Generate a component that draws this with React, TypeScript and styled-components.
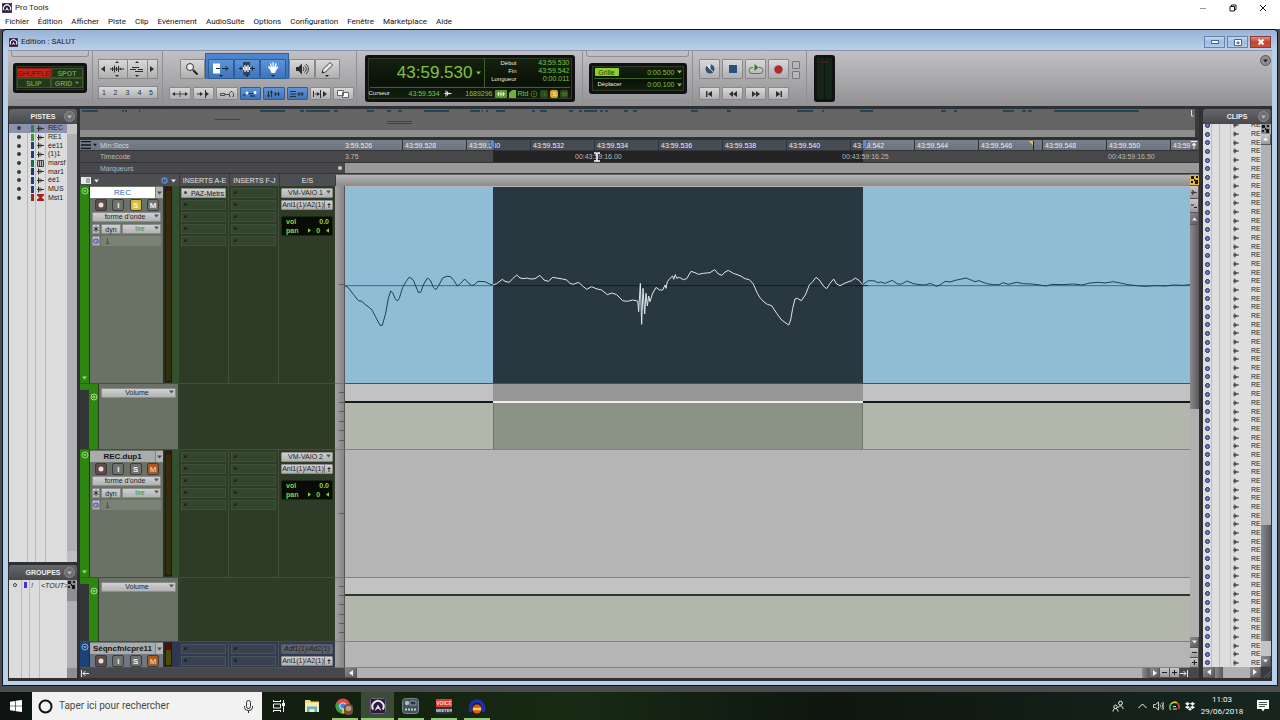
import React from "react";
import styled, { createGlobalStyle } from "styled-components";

const GlobalStyle = createGlobalStyle`
  *, *::before, *::after { box-sizing: border-box; }
  html, body { margin: 0; padding: 0; background: #4a4c4e; }
  body { font: 7px/9px "Liberation Sans", Arial, sans-serif; color: #1c1c1c; }
  button, select, input { font: inherit; color: inherit; margin: 0; padding: 0; border: 0; background: none; border-radius: 0; }
  button { display: flex; align-items: center; justify-content: center; cursor: pointer; }
  select { appearance: none; }
  ul { list-style: none; margin: 0; padding: 0; }
  svg { display: block; flex: none; }
`;

/* ---------- application frame ---------- */

const Page = styled.div`
  min-height: 100vh;
  display: flex;
  flex-direction: column;
  overflow: hidden;
`;

const AppTitle = styled.header`
  display: flex;
  align-items: center;
  height: 15px;
  padding: 0 2px;
  background: #fff;
  gap: 3px;
  font: 8px/12px Roboto, "Open Sans", sans-serif;
`;

const AppControls = styled.div`
  margin-left: auto;
  display: flex;
  button { width: 30px; height: 14px; }
  button:first-child { color: #999; }
`;

const MenuBar = styled.nav`
  display: flex;
  height: 14px;
  padding-left: 5px;
  background: #fff;
  gap: 9px;
  button { font: 8px/12px Roboto, "Open Sans", sans-serif; color: #111; white-space: nowrap; }
`;

const EditWindow = styled.main`
  flex: 1;
  display: flex;
  flex-direction: column;
  margin: 0 2px 6px;
  padding: 0 5px 4px;
  border: 1px solid #0b1420;
  border-radius: 4px 4px 0 0;
  background: linear-gradient(#98b3d6, #b9d0ea 20px);
`;

const WindowTitle = styled.div`
  display: flex;
  align-items: center;
  height: 20px;
  padding: 4px 1px 0;
  gap: 3px;
  font: 8px/12px Roboto, "Open Sans", sans-serif;
`;

const WindowButtons = styled.div`
  margin-left: auto;
  display: flex;
  gap: 2px;
`;

const WindowButton = styled.button<{ $close?: boolean }>`
  width: 21px;
  height: 12px;
  border: 1px solid ${(p) => (p.$close ? "#8d3a36" : "#6484ad")};
  background: ${(p) => (p.$close ? "linear-gradient(#dc9286, #c24432 50%, #c9523e)" : "linear-gradient(#c3d7ee, #9dbbdf 50%, #aecbea)")};
`;

/* ---------- toolbar ---------- */

const Toolbar = styled.div`
  display: flex;
  height: 56px;
  background: linear-gradient(#c1c1c5, #929294);
  border-top: 1px solid #8c92ac;
`;

const Section = styled.section<{ $w: number }>`
  width: ${(p) => p.$w}px;
  flex: none;
  display: flex;
  flex-direction: column;
  align-items: center;
  border-right: 1px solid #8f8f93;
`;

const Recess = styled.div<{ $bottom?: boolean }>`
  align-self: stretch;
  height: 6px;
  margin: 0 3px;
  border: 1px solid #8f8f93;
  ${(p) => (p.$bottom ? "border-bottom: 0; margin-top: auto; border-radius: 3px 3px 0 0;" : "border-top: 0; border-radius: 0 0 3px 3px;")}
`;

const Lcd = styled.div`
  background: linear-gradient(#16220f, #0a1207 60%, #142010);
  border: 3px solid #101110;
  border-radius: 3px;
  box-shadow: inset 0 0 0 1px #2f3a2a;
  color: #7fc441;
`;

const ModePad = styled(Lcd)`
  width: 74px;
  height: 30px;
  margin-top: 6px;
  padding: 2px 1px;
  display: grid;
  grid-template: 10px 10px / 1fr 1fr;
`;

const ModeButton = styled.button<{ $on?: boolean }>`
  gap: 3px;
  color: ${(p) => (p.$on ? "#5c0d08" : "#6c9a44")};
  background: ${(p) => (p.$on ? "#c8261a" : "#203817")};
  border: 1px solid ${(p) => (p.$on ? "#8e1d14" : "#38552b")};
  font-weight: ${(p) => (p.$on ? 400 : 700)};
`;

const ButtonRow = styled.div<{ $mt?: number; $gap?: number; $ml?: number }>`
  display: flex;
  margin-top: ${(p) => p.$mt ?? 0}px;
  margin-left: ${(p) => p.$ml ?? 0}px;
  gap: ${(p) => p.$gap ?? 0}px;
`;

const ToolButton = styled.button<{ $w: number; $h?: number; $on?: boolean; $edge?: string }>`
  width: ${(p) => p.$w}px;
  height: ${(p) => p.$h ?? 20}px;
  flex: none;
  color: #2e2e30;
  background: ${(p) => (p.$on ? "linear-gradient(#5e95d8, #3d74ba)" : "linear-gradient(#d9d9da, #b0b0b2)")};
  border: 1px solid ${(p) => (p.$on ? "#2f5c96" : "#88888b")};
  border-width: ${(p) => p.$edge ?? "1px"};
  border-radius: 1px;
`;

const SmartTools = styled.div`
  display: flex;
  align-items: flex-end;
  height: 26px;
  margin-top: -6px;
  padding: 0 2px;
  background: linear-gradient(#4f87ce, #3b70b6);
  border: 1px solid #305f9e;
  border-bottom: 0;
`;

const Counter = styled(Lcd)`
  width: 210px;
  height: 47px;
  margin-top: 4px;
  display: flex;
  flex-direction: column;
`;

const CounterTop = styled.div`
  display: flex;
  height: 30px;
  border-bottom: 1px solid #3c6425;
  margin: 0 2px;
`;

const MainTime = styled.output`
  width: 115px;
  display: flex;
  align-items: center;
  justify-content: flex-end;
  gap: 3px;
  padding-right: 3px;
  font-size: 17px;
  line-height: 18px;
  border-right: 1px solid #3c6425;
`;

const Ranges = styled.dl`
  flex: 1;
  display: grid;
  grid-template: repeat(3, 8px) / 32px 1fr;
  margin: 1px 0 0;
  text-align: right;
  dt { color: #e6eadf; font-size: 6px; line-height: 8px; }
  dd { margin: 0; line-height: 8px; }
`;

const CounterBottom = styled.div`
  display: flex;
  align-items: center;
  height: 11px;
  margin: 0 1px;
  gap: 2px;
  > b { color: #e6eadf; font-weight: 400; width: 38px; font-size: 6px; }
  > output { width: 32px; }
  > output:nth-of-type(2) { width: 38px; text-align: right; }
`;

const Badge = styled.span<{ $bg: string; $fg: string }>`
  width: 8px;
  height: 8px;
  line-height: 8px;
  font-size: 6px;
  text-align: center;
  border-radius: 2px;
  background: ${(p) => p.$bg};
  color: ${(p) => p.$fg};
`;

const GridPanel = styled(Lcd)`
  width: 98px;
  height: 31px;
  margin-top: 6px;
  padding: 0 2px;
`;

const GridRow = styled.div`
  display: flex;
  align-items: center;
  justify-content: flex-end;
  height: 12px;
  gap: 2px;
  & + & { border-top: 1px solid #3c6425; }
  > :first-child { margin-right: auto; }
`;

const GridPill = styled.button`
  width: 24px;
  height: 8px;
  margin-left: 1px;
  border-radius: 1px;
  background: #8fd12a;
  color: #24380c;
`;

const Nudge = styled.span`
  margin-left: 4px;
  color: #e6eadf;
  font-size: 6px;
`;

const Transport = styled.div`
  display: grid;
  grid-template: 20px 13px / repeat(4, 21px) 9px;
  gap: 8px 2px;
  margin-top: 8px;
`;

const SmallToggles = styled.div`
  display: flex;
  flex-direction: column;
  gap: 2px;
  padding: 2px 0 0 1px;
`;

const SmallToggle = styled.button`
  width: 8px;
  height: 8px;
  flex: none;
  border: 1px solid #77777a;
  border-radius: 1px;
  background: #b8b8ba;
`;

const OutputMeter = styled.div`
  width: 21px;
  height: 47px;
  margin: 4px 0 0 7px;
  padding: 2px;
  border: 3px solid #121212;
  border-radius: 3px;
  background: linear-gradient(90deg, #152417 45%, #0b140c 45%, #0b140c 55%, #152417 55%);
  &::before { content: ""; display: block; height: 2px; margin: 1px 2px; background: #4a1a16; }
`;

const RoundMenu = styled.button`
  width: 11px;
  height: 11px;
  border-radius: 50%;
  border: 1px solid #5a5a5c;
  background: #8f8f92;
  color: #232323;
`;

const ToolbarMenu = styled(RoundMenu)`
  margin: 4px 1px 0 auto;
`;

/* ---------- body ---------- */

const Body = styled.div`
  flex: 1;
  display: grid;
  grid-template-columns: 68px minmax(0, 1fr) 69px;
  column-gap: 3px;
  padding: 3px 1px;
  background: #2e3033;
`;

const SidePanel = styled.aside`
  display: flex;
  flex-direction: column;
  min-height: 0;
`;

const ClipsPanel = styled(SidePanel)`
  margin-left: 1px;
`;

const PanelHeader = styled.div<{ $second?: boolean }>`
  display: grid;
  grid-template-columns: 11px 1fr 11px;
  align-items: center;
  height: 15px;
  flex: none;
  margin-top: ${(p) => (p.$second ? 3 : 0)}px;
  padding: 0 2px;
  border-radius: 3px 3px 0 0;
  background: linear-gradient(#66676a, #48494c);
  color: #eee;
  h2 { grid-column: 2; margin: 0; text-align: center; font: 700 7px/10px "Liberation Sans", Arial, sans-serif; }
  button { background: #6e6f72; color: #bdbdbd; border-color: #8d8d90; }
`;

const PanelBody = styled.div<{ $fixed?: number }>`
  display: flex;
  ${(p) => (p.$fixed ? `flex: none; height: ${p.$fixed}px;` : "flex: 1;")}
  min-height: 0;
  overflow: hidden;
`;

const TrackPane = styled.div`
  flex: 1;
  min-width: 0;
  background: linear-gradient(90deg, #dcdcdc 18px, #b9b9b9 18px, #b9b9b9 19px, #dcdcdc 19px, #dcdcdc 26px, #b9b9b9 26px, #b9b9b9 27px, #dcdcdc 27px, #dcdcdc 36px, #b9b9b9 36px, #b9b9b9 37px, #dcdcdc 37px);
`;

const TrackList = styled.ul`
  display: flex;
  flex-direction: column;
  height: 78px;
`;

const TrackItem = styled.li<{ $on?: boolean }>`
  flex: 1;
  display: grid;
  grid-template-columns: 18px 10px 11px 1fr;
  align-items: center;
  line-height: 8px;
  white-space: nowrap;
  background: ${(p) => (p.$on ? "#8b93b0" : "transparent")};
`;

const Dot = styled.span`
  width: 4px;
  height: 4px;
  margin-left: 8px;
  border-radius: 50%;
  background: #3a3a3a;
`;

const ColorChip = styled.span<{ $c: string }>`
  width: 3px;
  height: 7px;
  margin-left: 4px;
  background: ${(p) => p.$c};
`;

const SideScroll = styled.div`
  width: 10px;
  display: flex;
  flex-direction: column;
  background: #ababad;
`;

const GroupItem = styled.div`
  display: grid;
  grid-template-columns: 15px 7px 10px 1fr;
  align-items: center;
  height: 10px;
  font-style: italic;
  white-space: nowrap;
`;

const GroupPane = styled.div`
  flex: 1;
  min-width: 0;
  background: linear-gradient(90deg, #dcdcdc 12px, #bcbcbc 12px, #bcbcbc 13px, #dcdcdc 13px, #dcdcdc 20px, #bcbcbc 20px, #bcbcbc 21px, #dcdcdc 21px, #dcdcdc 30px, #bcbcbc 30px, #bcbcbc 31px, #dcdcdc 31px);
`;

const ClipPane = styled.div`
  flex: 1;
  min-width: 0;
  display: flex;
  flex-direction: column;
  overflow: hidden;
  background: linear-gradient(90deg, #dedede 8px, #bcbcbc 8px, #bcbcbc 9px, #dedede 9px, #dedede 16px, #bcbcbc 16px, #bcbcbc 17px, #dedede 17px, #dedede 27px, #c6c6c6 27px, #c6c6c6 28px, #dedede 28px);
`;

const ClipList = styled.ul`
  flex: 1;
  display: flex;
  flex-direction: column;
  margin-top: -3px;
`;

const ClipItem = styled.li`
  flex: 1;
  display: grid;
  grid-template-columns: 28px 18px 1fr;
  align-items: center;
  line-height: 8px;
  padding-left: 2px;
`;

const ScrollButton = styled.button<{ $w: number; $h: number }>`
  width: ${(p) => p.$w}px;
  height: ${(p) => p.$h}px;
  flex: none;
  background: linear-gradient(135deg, #8a8a8c, #5c5c5e);
  border: 1px solid #555557;
  border-width: 0 1px 1px 0;
  color: #f2f2f2;
`;

const LightButton = styled(ScrollButton)<{ $ink?: string }>`
  background: linear-gradient(#c8c8c8, #9a9a9a);
  color: ${(p) => p.$ink ?? "#1f1f1f"};
`;

const Track = styled.div<{ $grow?: number; $h?: number; $dark?: boolean; $across?: boolean; $c?: string }>`
  ${(p) => (p.$h ? `flex: none; ${p.$across ? "width" : "height"}: ${p.$h}px;` : `flex: ${p.$grow ?? 1};`)}
  background: ${(p) => p.$c ?? (p.$dark ? "linear-gradient(90deg, #8a8a8c, #59595b)" : "#b0b0b2")};
`;

const HScroll = styled.div`
  display: flex;
  height: 11px;
  flex: none;
  background: #3a3b3d;
  color: #77787a;
`;

/* ---------- editor ---------- */

const Editor = styled.section`
  display: flex;
  flex-direction: column;
  min-width: 0;
`;

const Overview = styled.div`
  height: 28px;
  margin-bottom: 3px;
  overflow: hidden;
  background: linear-gradient(#656565 21px, #8e8e8e 21px);
  border-right: 4px solid #3a3b3d;
`;

const RulerRow = styled.div<{ $h: number; $bg?: string }>`
  display: flex;
  height: ${(p) => p.$h}px;
  background: ${(p) => p.$bg ?? "#48484a"};
  border-bottom: 1px solid #333538;
  color: ${(p) => (p.$bg ? "#d4d4d4" : "#b9b9b9")};
`;

const RulerName = styled.div`
  width: 265px;
  flex: none;
  display: flex;
  align-items: center;
  padding-left: 20px;
  position: relative;
`;

const RulerMenu = styled.button`
  position: absolute;
  left: 1px;
  top: 1px;
  gap: 2px;
  color: #14161a;
`;

const MarkerAdd = styled.button`
  width: 4px;
  height: 4px;
  margin: 0 3px 0 auto;
  border-radius: 50%;
  background: #c9c9c9;
`;

const Timeline = styled.div<{ $bg?: string }>`
  flex: 1;
  min-width: 0;
  display: flex;
  position: relative;
  overflow: hidden;
  background: ${(p) => p.$bg ?? "transparent"};
`;

const RulerSelection = styled.div<{ $c: string }>`
  position: absolute;
  inset: 0 auto 0 148px;
  width: 370px;
  background: ${(p) => p.$c};
`;

const Tick = styled.span<{ $w: number; $plain?: boolean; $first?: boolean }>`
  position: relative;
  width: ${(p) => p.$w}px;
  flex: none;
  padding-left: ${(p) => (p.$first ? 0 : 2)}px;
  border-left: ${(p) => (p.$plain || p.$first ? "0" : "1px solid #2d3238")};
  line-height: 11px;
  color: ${(p) => (p.$plain ? "#b9b9b9" : "#e9edf2")};
  white-space: nowrap;
`;

const OverMark = styled.svg<{ $x: number }>`
  position: absolute;
  left: ${(p) => p.$x}px;
  top: 1px;
`;

const EditArea = styled.div`
  display: flex;
  flex: 1;
`;

const Tracks = styled.div`
  flex: 1;
  min-width: 0;
`;

const ColumnHeads = styled.div`
  display: grid;
  grid-template-columns: 99px 50px 50px 56px 1fr;
  height: 12px;
  background: #4d4e51;
  color: #e4e4e4;
  text-align: center;
  line-height: 13px;
  > * + * { border-left: 1px solid #38393b; }
  > :last-child { background: linear-gradient(#b4b4b6, #8c8c8e); border-top: 1px solid #666; border-bottom: 1px solid #555; }
`;

const ListTools = styled.div`
  display: flex;
  align-items: center;
  gap: 3px;
  padding: 0 3px 0 1px;
  > :nth-child(3) { margin-left: auto; }
`;

type Tone = { bar: string; panel: string; mid: string; cell: string; slot: string; edge: string; mark: string };
const GREEN: Tone = { bar: "#2d860f", panel: "#697265", mid: "#33502f", cell: "#2d3b27", slot: "#34452e", edge: "#3f5139", mark: "#9be07c" };
const BLUE: Tone = { bar: "#1c4276", panel: "#707682", mid: "#2e3850", cell: "#323b4d", slot: "#39414f", edge: "#4a5364", mark: "#8db4e6" };

const TrackRow = styled.article<{ $h: number }>`
  display: grid;
  grid-template-columns: 255px 10px minmax(0, 1fr);
  height: ${(p) => p.$h}px;
  overflow: hidden;
`;

const Strip = styled.div<{ $t: Tone }>`
  display: grid;
  grid-template-columns: 10px 73px 16px 50px 50px 56px;
  background: ${(p) => p.$t.cell};
  border-bottom: 1px solid ${(p) => p.$t.edge};
  overflow: hidden;
`;

const ColorBar = styled.div<{ $t: Tone }>`
  display: flex;
  flex-direction: column;
  align-items: center;
  justify-content: space-between;
  padding: 1px 0 3px;
  border-right: 1px solid #1d3a14;
  background: ${(p) => p.$t.bar};
  color: ${(p) => p.$t.mark};
`;

const TrackPanel = styled.div<{ $t: Tone }>`
  background: ${(p) => p.$t.panel};
  overflow: hidden;
`;

const NameRow = styled.div<{ $on?: boolean }>`
  display: flex;
  height: 11px;
  margin-top: 1px;
  background: ${(p) => (p.$on ? "#fff" : "#a9abac")};
  input {
    flex: 1;
    min-width: 0;
    text-align: center;
    font-size: 8px;
    font-weight: ${(p) => (p.$on ? 400 : 700)};
    color: ${(p) => (p.$on ? "#2a6db5" : "#151515")};
  }
  button { width: 8px; background: #b4b4b6; color: #4c4c4e; border-left: 1px solid #808082; }
`;

const StateRow = styled.div`
  display: flex;
  justify-content: space-between;
  padding: 1px 4px 0 5px;
`;

const StateButton = styled.button<{ $bg?: string; $fg?: string }>`
  width: 12px;
  height: 12px;
  border-radius: 2px;
  border: 1px solid #3b3d3c;
  background: ${(p) => p.$bg ?? "#6f7270"};
  color: ${(p) => p.$fg ?? "#f4f4f4"};
  font-weight: 700;
  font-size: 8px;
`;

const Controls = styled.div`
  display: grid;
  grid-template: repeat(3, 10px) / 8px 20px 39px;
  gap: 2px 1px;
  padding: 1px 2px;
`;

const Drop = styled.span<{ $wide?: boolean; $dim?: boolean }>`
  position: relative;
  display: block;
  height: 10px;
  ${(p) => (p.$wide ? "grid-column: 1 / -1;" : "")}
  select {
    display: block;
    width: 100%;
    height: 10px;
    padding: ${(p) => (p.$dim ? "0" : "0 6px 0 3px")};
    text-align-last: center;
    border-radius: 1px;
    border: 1px solid ${(p) => (p.$dim ? "#565c66" : "#8b8c8b")};
    background: ${(p) => (p.$dim ? "#5c636f" : "linear-gradient(#d0d0d0, #b2b2b2)")};
    line-height: 8px;
    font-style: ${(p) => (p.$dim ? "italic" : "normal")};
  }
  svg { position: absolute; right: 2px; top: 2px; color: #555; pointer-events: none; }
`;

const GreenDrop = styled(Drop)`
  select { color: #3d8a34; }
`;

const MiniButton = styled.button`
  height: 10px;
  border-radius: 1px;
  border: 1px solid #8b8c8b;
  background: linear-gradient(#d0d0d0, #b2b2b2);
`;

const Elastic = styled.div`
  grid-column: 2 / -1;
  padding-left: 4px;
  background: #7a8275;
  color: #4c534a;
`;

const MeterCell = styled.div<{ $t: Tone; $hot?: boolean }>`
  padding: 1px 7px 1px 2px;
  background: linear-gradient(90deg, #2b2f2a 9px, ${(p) => p.$t.mid} 9px);
  display: flex;
  &::before {
    content: "";
    flex: 1;
    border: 1px solid #1d1b10;
    background: ${(p) => (p.$hot ? "linear-gradient(#4a1208 6px, #4f4a08 6px)" : "linear-gradient(#3a1a0c 3px, #3a2a0c 3px, #30300a)")};
  }
`;

const Slots = styled.ul<{ $t: Tone }>`
  display: flex;
  flex-direction: column;
  gap: 2px;
  padding: 2px 2px 0;
  border-right: 1px solid ${(p) => p.$t.edge};
`;

const Slot = styled.li<{ $t: Tone; $on?: boolean }>`
  display: flex;
  align-items: center;
  height: 10px;
  flex: none;
  background: ${(p) => (p.$on ? "linear-gradient(#d0d0d0, #b2b2b2)" : p.$t.slot)};
  border: 1px solid ${(p) => (p.$on ? "#8b8c8b" : p.$t.edge)};
  white-space: nowrap;
  &::before { content: ""; width: 3px; height: 3px; margin: 0 4px 1px 2px; border-radius: 50%; background: ${(p) => (p.$on ? "#444" : "#1b2717")}; }
`;

const IoColumn = styled.div`
  display: flex;
  flex-direction: column;
  gap: 2px;
  padding: 2px 2px 0;
`;

const OutputRow = styled.div`
  display: flex;
  height: 10px;
  border: 1px solid #8b8c8b;
  border-radius: 1px;
  background: linear-gradient(#d0d0d0, #b2b2b2);
  white-space: nowrap;
  button:first-child { flex: 1; line-height: 8px; }
  button:last-child { width: 8px; border-left: 1px solid #77777a; }
`;

const VolPan = styled.dl`
  display: grid;
  grid-template: 9px 9px / 1fr 1fr;
  margin: 4px 0 0;
  padding: 0 3px 0 4px;
  height: 20px;
  border-radius: 2px;
  background: #070d05;
  border: 1px solid #1c2718;
  color: #8fd048;
  font-weight: 700;
  dd { margin: 0; text-align: right; }
`;

const PanValue = styled.dd`
  display: flex;
  align-items: center;
  justify-content: space-between;
`;

const Scale = styled.div`
  display: flex;
  flex-direction: column;
  align-items: flex-end;
  justify-content: space-evenly;
  background: linear-gradient(90deg, #a2a2a2, #858585);
  border-right: 1px solid #555;
  border-bottom: 1px solid #777;
  i { width: 5px; height: 1px; background: #5b5b5b; }
`;

const Stage = styled.div<{ $edge?: string }>`
  position: relative;
  display: grid;
  grid-template-columns: 148px 370px minmax(0, 1fr);
  overflow: hidden;
  background: #b5b5b5;
  border-bottom: 1px solid ${(p) => p.$edge ?? "#7f827e"};
`;

const ClipPart = styled.div<{ $on?: boolean }>`
  margin-top: 1px;
  background: ${(p) => (p.$on ? "#293840" : "#8fbdd6")};
`;

const WavePlot = styled.svg`
  position: absolute;
  left: 0;
  top: 1px;
`;

const LaneStrip = styled.div`
  display: grid;
  grid-template-columns: 9px 9px 1px 79px 1px 1fr;
  background: #2d3b27;
  border-bottom: 1px solid #3f5139;
  > :nth-child(1) { background: linear-gradient(#2d860f 6px, #343635 6px); }
  > :nth-child(2) { background: #2d860f; color: #a7e58c; display: flex; justify-content: center; padding-top: 9px; }
  > :nth-child(4) { background: #697265; padding: 4px 2px; }
  > :nth-child(6) { border-left: 1px solid #33452d; }
`;

const LanePart = styled.div<{ $on?: boolean; $top: number; $weight: number; $line: string }>`
  background: ${(p) => (p.$on ? "#8b9286" : "#b1b8ab")};
  box-shadow: ${(p) => (p.$on ? "inset 1px 0 #6f736d, inset -1px 0 #6f736d" : "none")};
  &::before {
    content: "";
    display: block;
    height: ${(p) => p.$top + p.$weight}px;
    background: ${(p) => (p.$on ? "#969696" : "#c2c2c2")};
    border-bottom: ${(p) => p.$weight}px solid ${(p) => p.$line};
  }
`;

const VScroll = styled.div`
  width: 9px;
  flex: none;
  display: flex;
  flex-direction: column;
  background: #b0b0b2;
`;

const BottomBar = styled.div`
  display: flex;
  height: 10px;
  background: #47484b;
  color: #e8e8e8;
`;

const BottomLeft = styled.div`
  width: 265px;
  flex: none;
  display: flex;
  align-items: center;
  padding-left: 1px;
`;

const EndButton = styled.button`
  width: 19px;
  justify-content: flex-start;
`;

const Beam = styled.svg`
  position: absolute;
  left: 248px;
  top: 1px;
  z-index: 2;
`;

/* ---------- taskbar ---------- */

const Taskbar = styled.footer`
  display: flex;
  align-items: stretch;
  height: 28px;
  background: linear-gradient(90deg, #0c1310, #14220f 30%, #182a14 45%, #0e160f 65%, #182620);
  color: #f3f3f3;
`;

const TaskButton = styled.button<{ $open?: boolean; $on?: boolean }>`
  width: 33px;
  background: ${(p) => (p.$open ? `linear-gradient(#8fcb73, #8fcb73) center bottom / ${p.$on ? 33 : 26}px 2px no-repeat` : "none")} ${(p) => (p.$on ? "#3c4a38" : "")};
`;

const StartButton = styled(TaskButton)`
  width: 32px;
`;

const Search = styled.label`
  display: flex;
  align-items: center;
  width: 230px;
  padding: 0 9px 0 6px;
  gap: 6px;
  background: #f2f2f2;
  color: #222;
  input { flex: 1; min-width: 0; font: 10px/14px Roboto, "Open Sans", sans-serif; color: #4a4a4a; outline: 0; }
  input::placeholder { color: #4a4a4a; opacity: 1; }
`;

const Tray = styled.div`
  margin-left: auto;
  display: flex;
  align-items: center;
  button { width: 16px; height: 28px; }
  button:first-child { margin-right: 8px; }
`;

const Clock = styled.time`
  width: 48px;
  text-align: center;
  font: 8px/12px Roboto, "Open Sans", sans-serif;
`;

const NoticeButton = styled.button`
  && { width: 34px; }
`;

/* ---------- icons ---------- */

const Down = ({ s = 5 }: { s?: number }) => (
  <svg width={s} height="4" viewBox="0 0 5 4" aria-hidden="true"><path d="M0 .5h5L2.5 3.5z" fill="currentColor" /></svg>
);
const Up = () => <svg width="5" height="4" viewBox="0 0 5 4" aria-hidden="true"><path d="M0 3.5h5L2.5.5z" fill="currentColor" /></svg>;
const Left = ({ s = 6 }: { s?: number }) => <svg width={s === 6 ? 4 : 3} height={s} viewBox="0 0 4 6" aria-hidden="true"><path d="M4 0v6L0 3z" fill="currentColor" /></svg>;
const Right = ({ s = 6 }: { s?: number }) => <svg width={s === 6 ? 4 : 3} height={s} viewBox="0 0 4 6" aria-hidden="true"><path d="M0 0v6l4-3z" fill="currentColor" /></svg>;

const Stroke = ({ w, h, d, fill, sw = 1 }: { w: number; h: number; d: string; fill?: string; sw?: number }) => (
  <svg width={w} height={h} viewBox={`0 0 ${w} ${h}`} fill="none" stroke="currentColor" strokeWidth={sw} aria-hidden="true">
    <path d={d} />
    {fill && <path d={fill} fill="currentColor" stroke="none" />}
  </svg>
);

const WaveGlyph = ({ w = 7, h = 7, c = "#333" }: { w?: number; h?: number; c?: string }) => (
  <svg width={w} height={h} viewBox="0 0 7 7" aria-hidden="true"><path d="M0 3.5h7M1.5.5v6M3 1.5v4M4.5 2.6v1.8" stroke={c} fill="none" /></svg>
);

const AvidGlyph = ({ s = 10 }: { s?: number }) => (
  <svg width={s} height={s} viewBox="0 0 16 16" aria-hidden="true">
    <rect width="16" height="16" rx="1" fill="#2b1a3c" />
    <rect x=".5" y=".5" width="15" height="15" rx="1" fill="none" stroke="#6f6480" />
    <path d="M3.200 11.500a5.600 5.600 0 1 1 9.600 0" fill="none" stroke="#ece8f2" strokeWidth="2" />
    <path d="M4.400 13 8 6.500 11.600 13 8 10.600z" fill="#ece8f2" />
  </svg>
);

const CheckerGlyph = ({ gold }: { gold?: boolean }) => (
  <svg width="9" height="10" viewBox="0 0 9 10" aria-hidden="true">
    <rect width="9" height="10" fill={gold ? "#e0b836" : "#8c8c8c"} />
    <path d="M1 1h3v3H1zM5 5h3v4H5zM4 4h1v2H4zM6 1h2v2H6z" fill="#17171a" />
    <path d="M1 6h2v2H1z" fill="#17171a" />
  </svg>
);

const ClockGlyph = ({ s = 7, c = "#3c4a8e" }: { s?: number; c?: string }) => (
  <svg width={s} height={s} viewBox="0 0 8 8" aria-hidden="true">
    <circle cx="4" cy="4" r="3" fill="none" stroke={c} strokeWidth="1.4" /><path d="M4 2v2l1.5 1" stroke={c} fill="none" />
  </svg>
);

/* ---------- data ---------- */

const MENUS = ["Fichier", "Édition", "Afficher", "Piste", "Clip", "Evénement", "AudioSuite", "Options", "Configuration", "Fenêtre", "Marketplace", "Aide"];

const TRACKS: [string, string, string?][] = [
  ["REC", "#3c7d3a"], ["RE1", "#3c9a2a"], ["éé11", "#1f3f86"], ["(1)1", "#1f3f86"], ["marsf", "#1f6a4a", "box"],
  ["mar1", "#1d3566"], ["éé1", "#1f3f86"], ["MUS", "#1f3f86"], ["Mst1", "#a3211e", "master"],
];

const OVERVIEW: [number, number][] = [
  [82, 98], [122, 124], [125, 127], [139, 140], [260, 285], [300, 304], [306, 330], [334, 338], [367, 374], [387, 391], [398, 402],
  [424, 449], [470, 480], [482, 483], [486, 488], [496, 505], [532, 535], [540, 547], [569, 573], [579, 582], [584, 597], [600, 603],
  [605, 608], [624, 628], [633, 637], [691, 698], [727, 731], [797, 813], [822, 824], [860, 873], [941, 946], [954, 957], [1003, 1014],
  [1022, 1026], [1028, 1032], [1054, 1139],
];

const BEFORE = "15,107 25,113 40,133 55,152 65,154 75,163 95,178 108,203 120,226 127,226 137,190 145,145 152,123 158,128 165,145 172,153 178,145 188,112 198,95 208,81 220,90 228,110 235,127 242,127 250,105 262,84 272,92 280,112 288,119 296,107 308,84 320,79 332,80 342,92 352,108 362,100 374,87 384,98 394,106 402,105 414,94 435,95 448,102 459,105";
const INSIDE = "459,105 470,101 487,88 495,94 508,97 518,86 530,75 540,84 552,86 560,84 572,87 585,86 600,76 612,90 625,94 638,82 650,84 668,87 680,90 690,100 700,103 715,97 728,108 740,118 755,110 768,116 785,120 802,134 815,129 830,134 848,152 862,154 878,150 893,153 896,185 901,100 905,223 909,115 914,192 918,130 922,168 926,138 930,155 937,132 948,112 958,120 968,120 975,105 978,115 982,95 990,85 998,78 1001,88 1006,74 1010,85 1018,82 1030,89 1040,86 1053,64 1065,68 1075,73 1090,70 1110,68 1124,59 1135,72 1146,76 1155,66 1165,61 1180,70 1200,77 1215,86 1228,89 1240,102 1252,130 1260,143 1272,156 1282,163 1295,167 1310,190 1325,210 1346,225 1352,210 1358,175 1365,147 1372,145 1384,152 1396,135 1408,105 1418,95 1428,82 1438,90 1450,108 1460,116 1470,100 1481,87 1490,102 1500,107 1518,98 1535,92 1546,84 1558,92 1568,104";
const AFTER = "308,104 325,92 345,93 352,98 362,96 375,100 397,91 412,102 425,102 441,93 460,101 480,104 495,105 511,100 530,109 543,103 555,94 570,96 590,90 605,87 618,84 635,91 645,95 657,92 680,101 700,104 718,104 729,98 745,103 770,97 790,101 815,102 840,105 858,108 875,103 905,104 940,102 965,105 990,99 1015,97 1035,99 1060,95 1085,100 1105,104 1130,107 1155,109 1185,107 1215,108 1240,105 1270,106 1290,104";

const SECONDS = ["43:59.528", "43:59.530", "43:59.532", "43:59.534", "43:59.536", "43:59.538", "43:59.540", "43:59.542", "43:59.544", "43:59.546", "43:59.548", "43:59.550", "43:59"];

/* ---------- track parts ---------- */

function TrackStrip({ name, tone, selected, solo, muted, insert, input, short }: {
  name: string; tone: Tone; selected?: boolean; solo?: boolean; muted?: boolean; insert?: string; input: string; short?: boolean;
}) {
  const slots = short ? [0, 1] : [0, 1, 2, 3, 4];
  return (
    <Strip $t={tone}>
      <ColorBar $t={tone}>
        <svg width="8" height="8" viewBox="0 0 8 8"><circle cx="4" cy="4" r="3" fill="none" stroke="currentColor" /><path d="M2.4 3.2h3.2L4 5.4z" fill="currentColor" /></svg>
        {!short && <Down />}
      </ColorBar>
      <TrackPanel $t={tone}>
        <NameRow $on={selected}>
          <input aria-label="Nom de piste" defaultValue={name} />
          <button aria-label="Options de piste"><Down /></button>
        </NameRow>
        <StateRow>
          <StateButton aria-label="Armer" $bg="#5d4a4b"><svg width="6" height="6"><circle cx="3" cy="3" r="2.5" fill="#f0d8d8" /></svg></StateButton>
          <StateButton>I</StateButton>
          <StateButton $bg={solo ? "#d3bd3a" : undefined}>S</StateButton>
          <StateButton $bg={muted ? "#a95a22" : undefined} $fg={muted ? "#f0c090" : undefined}>M</StateButton>
        </StateRow>
        {!short && (
          <Controls>
            <Drop $wide><select aria-label="Affichage"><option>forme d'onde</option></select><Down /></Drop>
            <MiniButton aria-label="Figer"><Stroke w={6} h={6} d="M3 0v6M.5 1.5l5 3M5.5 1.5l-5 3" sw={0.8} /></MiniButton>
            <MiniButton>dyn</MiniButton>
            <GreenDrop><select aria-label="Automation"><option>lire</option></select><Down /></GreenDrop>
            <MiniButton aria-label="Base temporelle"><ClockGlyph s={6} c="#4450b0" /></MiniButton>
            <Elastic><Stroke w={5} h={9} d="M2.5 2v4M.5 7.5h4M1 6h3" /></Elastic>
          </Controls>
        )}
      </TrackPanel>
      <MeterCell $t={tone} $hot={short} />
      <Slots $t={tone}>{slots.map((i) => <Slot key={i} $t={tone} $on={i === 0 && !!insert}>{i === 0 ? insert : null}</Slot>)}</Slots>
      <Slots $t={tone}>{slots.map((i) => <Slot key={i} $t={tone} />)}</Slots>
      <IoColumn>
        <Drop $dim={short}><select aria-label="Entrée"><option>{input}</option></select>{!short && <Down />}</Drop>
        <OutputRow><button>Anl1(1)/A2(1)</button><button aria-label="Fenêtre de sortie"><Stroke w={4} h={6} d="M2 1v5M.5 2.5h3" sw={0.8} /></button></OutputRow>
        {!short && <VolPan><dt>vol</dt><dd>0.0</dd><dt>pan</dt><PanValue><Right s={5} />0<Left s={5} /></PanValue></VolPan>}
      </IoColumn>
    </Strip>
  );
}

function VolumeLane({ height, top, weight, selected, ink }: { height: number; top: number; weight: number; selected?: boolean; ink: string }) {
  return (
    <TrackRow $h={height}>
      <LaneStrip>
        <div />
        <div><svg width="8" height="8" viewBox="0 0 8 8"><circle cx="4" cy="4" r="3" fill="none" stroke="currentColor" /><path d="M4 2.4v3.2M2.4 4h3.2" stroke="currentColor" /></svg></div>
        <div />
        <div><Drop><select aria-label="Automation affichée"><option>Volume</option></select><Down /></Drop></div>
        <div />
        <div />
      </LaneStrip>
      <Scale><i /><i /><i /><i /><i /><i /></Scale>
      <Stage>
        <LanePart $top={top} $weight={weight} $line={ink} />
        <LanePart $top={top} $weight={weight} $on={selected} $line={selected ? "#eeeeee" : ink} />
        <LanePart $top={top} $weight={weight} $line={ink} />
      </Stage>
    </TrackRow>
  );
}

/* ---------- application ---------- */

export default function App() {
  return (
    <Page>
      <GlobalStyle />
      <AppTitle>
        <AvidGlyph />
        <span>Pro Tools</span>
        <AppControls>
          <button aria-label="Réduire"><Stroke w={8} h={8} d="M1 4.5h6" /></button>
          <button aria-label="Restaurer"><Stroke w={8} h={8} d="M1 2.5h4.5V7H1zM2.5 2.5V1H7v4.5H5.5" /></button>
          <button aria-label="Fermer"><Stroke w={8} h={8} d="M1 1l6 6M7 1L1 7" /></button>
        </AppControls>
      </AppTitle>
      <MenuBar>{MENUS.map((m) => <button key={m}>{m}</button>)}</MenuBar>

      <EditWindow>
        <WindowTitle>
          <AvidGlyph s={9} />
          <span>Edition : SALUT</span>
          <WindowButtons>
            <WindowButton aria-label="Réduire"><svg width="8" height="4"><rect x=".5" y=".5" width="7" height="3" fill="#fff" stroke="#4a6388" /></svg></WindowButton>
            <WindowButton aria-label="Agrandir"><svg width="8" height="7"><path d="M.5.5h7v6h-7zM3 3h2v1.5H3z" fill="#fff" stroke="#4a6388" /></svg></WindowButton>
            <WindowButton $close aria-label="Fermer"><svg width="8" height="6"><path d="M1.5.5l5 5M6.500.5l-5 5" stroke="#fff" strokeWidth="2" /></svg></WindowButton>
          </WindowButtons>
        </WindowTitle>

        <Toolbar>
          <Section $w={85}>
            <Recess />
            <ModePad>
              <ModeButton $on>SHUFFLE</ModeButton><ModeButton>SPOT</ModeButton>
              <ModeButton>SLIP</ModeButton><ModeButton>GRID <Down s={4} /></ModeButton>
            </ModePad>
            <Recess $bottom />
          </Section>

          <Section $w={70}>
            <ButtonRow $mt={8}>
              <ToolButton $w={10} $edge="1px 0 1px 1px" aria-label="Zoom arrière"><Left /></ToolButton>
              <ToolButton $w={20} $edge="1px 1px 1px 0" aria-label="Zoom audio"><Stroke w={14} h={16} d="M0 8h14M2.500 6v4M4.500 4.500v7M6.500 6v4M8.500 5v6M10.500 7v2" fill="M5 2l2-2 2 2zM5 14l2 2 2-2z" /></ToolButton>
              <ToolButton $w={20} $edge="1px 1px 1px 0" aria-label="Zoom MIDI"><Stroke w={14} h={16} d="M2 6.500h7M0 8.500h6M5 10.500h8M8 8.500h5" fill="M5 2l2-2 2 2zM5 14l2 2 2-2z" /></ToolButton>
              <ToolButton $w={10} $edge="1px 1px 1px 0" aria-label="Zoom avant"><Right /></ToolButton>
            </ButtonRow>
            <ButtonRow $mt={7}>
              {[1, 2, 3, 4, 5].map((n) => <ToolButton key={n} $w={12} $h={13} $edge={n === 1 ? "1px 0 1px 1px" : n === 5 ? "1px 1px 1px 0" : "1px 0"}>{n}</ToolButton>)}
            </ButtonRow>
          </Section>

          <Section $w={194}>
            <ButtonRow $mt={8}>
              <ToolButton $w={25} aria-label="Loupe"><svg width="14" height="14" viewBox="0 0 14 14"><circle cx="5" cy="5" r="3.500" fill="#eee" stroke="#333" /><path d="M8 8l4.500 4.500" stroke="#222" strokeWidth="2" /></svg></ToolButton>
              <SmartTools>
                <ToolButton $w={26} $on aria-label="Trim"><svg width="18" height="16" viewBox="0 0 18 16"><path d="M1 2.500h7v10H1z" fill="#fff" /><path d="M4 7.500h4M10 7.500h6M13.500 5l2.500 2.500-2.500 2.500" stroke="#14233c" fill="none" /><path d="M7 14l2 2 2-2z" fill="#14233c" /></svg></ToolButton>
                <ToolButton $w={26} $on aria-label="Sélecteur"><svg width="18" height="16" viewBox="0 0 18 16"><path d="M5 1h7v13H5z" fill="#33415c" /><path d="M1 7.500h16M3 5.500v4M14.500 5.500v4" stroke="#14233c" /><path d="M5.500 6v3M7 4v7M8.500 5.500v4M10 4v7M11.500 6v3" stroke="#fff" strokeWidth="1.200" /><path d="M7 14l2 2 2-2z" fill="#14233c" /></svg></ToolButton>
                <ToolButton $w={26} $on aria-label="Main"><svg width="14" height="16" viewBox="0 0 14 16"><path d="M4 8.500L1.800 6l1-1 2 1.600L3.800 2.500 5 2.200 6 6h.5V1.200h1.300V6h.5L9.500 2l1.200.4L10 6.500l1.600-1.300.9.800L10 9.500 9 12H5.500z" fill="#fff" /><path d="M5 14l2 2 2-2z" fill="#14233c" /></svg></ToolButton>
              </SmartTools>
              <ToolButton $w={26} aria-label="Scrub"><Stroke w={14} h={14} d="M8 5c1.200 1.200 1.200 2.800 0 4M9.500 3.500c2.300 2 2.300 5 0 7M11 2c3.200 3 3.200 7 0 10" fill="M1 5h2.500L7 1.500v11L3.500 9H1z" sw={0.9} /></ToolButton>
              <ToolButton $w={25} aria-label="Crayon"><svg width="14" height="16" viewBox="0 0 14 16"><path d="M2 12l1-3.500L10 1.500l2.500 2.500L5.500 11z" fill="#f2f2f2" stroke="#3a3a3a" /><path d="M2 12l.7-2 1.300 1.300z" fill="#222" /><path d="M5 14l2 2 2-2z" fill="#222" /></svg></ToolButton>
            </ButtonRow>
            <ButtonRow $mt={8} $gap={2} $ml={3}>
              <ToolButton $w={22} $h={13} aria-label="Zoom temporaire"><Stroke w={16} h={8} d="M3 4h10M8 1v6" fill="M0 4l3-2v4zM16 4l-3-2v4z" sw={0.8} /></ToolButton>
              <ToolButton $w={21} $h={13} aria-label="Tab vers transitoire"><Stroke w={14} h={8} d="M1 4h5M9.500 0v8" fill="M4 2l3 2-3 2zM10 2l3 2-3 2z" /></ToolButton>
              <ToolButton $w={22} $h={13} aria-label="Miroir MIDI"><Stroke w={16} h={8} d="M1.500 3.500h4v2h-4zM6 4.500h4M11.500 6.500h-1v-3l1.500-2h1l1.500 2v3h-1" sw={0.8} /></ToolButton>
              <ToolButton $w={21} $h={13} $on aria-label="Suivi automation"><svg width="16" height="8" viewBox="0 0 16 8"><path d="M1 6l4-3 4 1 5-2M8 6h5" stroke="#14233c" fill="none" /><circle cx="5" cy="3" r="1.500" fill="#fff" /><circle cx="13" cy="2.500" r="1.500" fill="#fff" /></svg></ToolButton>
              <ToolButton $w={22} $h={13} $on aria-label="Lier sélection"><Stroke w={16} h={8} d="M2.500 1v6M5.500 1v6M8 4h6M9.500 2v4M12.500 2v4" fill="M1 5h3L2.500 8zM4 3h3L5.500 0z" /></ToolButton>
              <ToolButton $w={21} $h={13} $on aria-label="Lier pistes"><Stroke w={16} h={8} d="M1 1.500h6M1 4h6M1 6.500h6M8 4h7M10 2v4M13 2v4" /></ToolButton>
              <ToolButton $w={21} $h={13} aria-label="Insertion suit lecture"><Stroke w={16} h={8} d="M1.500 1v6M3 4h4M8.500 0v8" fill="M5 2l3 2-3 2zM11 1l4 3-4 3z" /></ToolButton>
              <ToolButton $w={21} $h={13} aria-label="Disposition"><svg width="12" height="8"><path d="M.5.500h6v5h-6zM5.500 2.500h6v5h-6z" fill="#fafafa" stroke="#666" /></svg></ToolButton>
            </ButtonRow>
          </Section>

          <Section $w={226}>
            <Counter>
              <CounterTop>
                <MainTime>43:59.530 <Down s={5} /></MainTime>
                <Ranges>
                  <dt>Début</dt><dd>43:59.530</dd>
                  <dt>Fin</dt><dd>43:59.542</dd>
                  <dt>Longueur</dt><dd>0:00.011</dd>
                </Ranges>
              </CounterTop>
              <CounterBottom>
                <b>Curseur</b>
                <output>43:59.534</output>
                <WaveGlyph w={10} c="#e6eadf" />
                <output>1689296</output>
                <svg width="12" height="8"><rect width="12" height="8" rx="1" fill="#5a962f" /><path d="M2 4h8M3.500 2v4M6 1.500v5M8.500 2v4" stroke="#dff0c8" /></svg>
                <svg width="7" height="8"><path d="M0 3l3-3h4v8H0z" fill="#6fae3a" /></svg>
                <span>Rtd</span>
                <svg width="8" height="8"><circle cx="4" cy="4" r="3" fill="none" stroke="#3f6e26" /><circle cx="4" cy="4" r="1" fill="#3f6e26" /></svg>
                <Badge $bg="#2c4a1c" $fg="#5f9139">I</Badge>
                <Badge $bg="#d8a42a" $fg="#fff3c0">S</Badge>
                <Badge $bg="#2c4a1c" $fg="#5f9139">M</Badge>
              </CounterBottom>
            </Counter>
          </Section>

          <Section $w={110}>
            <Recess />
            <GridPanel>
              <GridRow><GridPill>Grille</GridPill><output>0:00.500</output><Down /></GridRow>
              <GridRow><Nudge>Déplacer</Nudge><output>0:00.100</output><Down /></GridRow>
            </GridPanel>
            <Recess $bottom />
          </Section>

          <Section $w={114}>
            <Transport>
              <ToolButton $w={21} aria-label="En ligne"><svg width="10" height="10" viewBox="0 0 10 10"><circle cx="5" cy="5" r="4.500" fill="#33526e" /><path d="M5 5V.5A4.500 4.500 0 0 0 2 1.500zM5 5l3.500 3" fill="#dfe5ea" stroke="#dfe5ea" /></svg></ToolButton>
              <ToolButton $w={21} aria-label="Stop"><svg width="8" height="8"><rect width="8" height="8" fill="#23527e" /></svg></ToolButton>
              <ToolButton $w={21} aria-label="Lecture en boucle"><svg width="16" height="12" viewBox="0 0 16 12"><path d="M5 4.500H4a3 3 0 0 0 0 6h8a3 3 0 0 0 0-6h-1" fill="none" stroke="#4d7d4d" /><path d="M6.500 1l4 3.500-4 3.500z" fill="#2d7a31" /></svg></ToolButton>
              <ToolButton $w={21} aria-label="Enregistrer"><svg width="9" height="9"><circle cx="4.500" cy="4.500" r="4.200" fill="#a82f2c" /></svg></ToolButton>
              <SmallToggles><SmallToggle aria-label="Pré-roll" /><SmallToggle aria-label="Post-roll" /></SmallToggles>
              <ToolButton $w={21} $h={13} aria-label="Début"><Stroke w={7} h={6} d="M.7 0v6" sw={1.4} fill="M6 0v6L1.500 3z" /></ToolButton>
              <ToolButton $w={21} $h={13} aria-label="Retour rapide"><Stroke w={8} h={6} d="" fill="M4 0v6L0 3zM8 0v6L4 3z" /></ToolButton>
              <ToolButton $w={21} $h={13} aria-label="Avance rapide"><Stroke w={8} h={6} d="" fill="M0 0v6l4-3zM4 0v6l4-3z" /></ToolButton>
              <ToolButton $w={21} $h={13} aria-label="Fin"><Stroke w={7} h={6} d="M6.300 0v6" sw={1.4} fill="M1 0v6l4.500-3z" /></ToolButton>
            </Transport>
          </Section>

          <OutputMeter />
          <ToolbarMenu aria-label="Options de la barre"><Down /></ToolbarMenu>
        </Toolbar>

        <Body>
          <SidePanel>
            <PanelHeader><h2>PISTES</h2><RoundMenu aria-label="Options des pistes"><Down /></RoundMenu></PanelHeader>
            <PanelBody>
              <TrackPane>
                <TrackList>
                  {TRACKS.map(([name, color, kind], i) => (
                    <TrackItem key={name} $on={i === 0}>
                      <Dot /><ColorChip $c={color} />
                      {kind === "box" ? <svg width="7" height="7"><path d="M.5.5h6v6h-6z" fill="#bbb" stroke="#444" /><path d="M2.500 1v5M4.500 1v5" stroke="#444" /></svg>
                        : kind === "master" ? <svg width="7" height="7"><path d="M0 0h7v1.500L4.500 3.500 7 5.500V7H0V5.500l2.500-2L0 1.500z" fill="#a3211e" /></svg>
                        : <WaveGlyph />}
                      <span>{name}</span>
                    </TrackItem>
                  ))}
                </TrackList>
              </TrackPane>
              <SideScroll><Track $h={10} $c="#c6c6c8" /><Track /><Track $h={11} $c="#bfbfc1" /></SideScroll>
            </PanelBody>
            <PanelHeader $second><h2>GROUPES</h2><RoundMenu aria-label="Options des groupes"><Down /></RoundMenu></PanelHeader>
            <PanelBody $fixed={98}>
              <GroupPane>
                <GroupItem>
                  <svg width="10" height="6"><circle cx="6" cy="3" r="1.500" fill="none" stroke="#444" /></svg>
                  <svg width="3" height="6"><rect width="3" height="6" fill="#4a2fd0" /></svg>
                  <span>!</span><span>&lt;TOUT&gt;</span>
                </GroupItem>
              </GroupPane>
              <SideScroll><CheckerGlyph /><Track $h={11} $c="#8e8e90" /><Track /><Track $h={10} $c="#8e8e90" /></SideScroll>
            </PanelBody>
          </SidePanel>

          <Editor>
            <Overview>
              <svg width="1115" height="28" viewBox="80 109 1115 28" aria-hidden="true">
                {OVERVIEW.map(([a, b]) => <rect key={a} x={a} y="110" width={b - a} height="2" fill="#234558" />)}
                <rect x="215" y="119" width="25" height="1" fill="#9c1a30" />
                <path d="M387 121.500h25M387 123.500h25" stroke="#6d1f80" />
                <path d="M1191.500 110v6h2" stroke="#ddd" fill="none" />
              </svg>
            </Overview>

            <RulerRow $h={11} $bg="linear-gradient(#78818c, #69727d)">
              <RulerName>
                <RulerMenu aria-label="Règles"><Stroke w={10} h={8} d="M0 .5h10M0 4h10M0 7.500h10" sw={1.5} /><Down s={4} /></RulerMenu>
                Min:Secs
              </RulerName>
              <Timeline>
                <RulerSelection $c="#474b54" />
                <Tick $w={57} $first>3:59.526</Tick>
                {SECONDS.map((s, i) => <Tick key={i} $w={64}>{s}</Tick>)}
                <OverMark $x={144} width="6" height="9" viewBox="0 0 6 9"><path d="M5.500 0v9L1 4V0" fill="#5a8fd0" stroke="#1d355c" strokeWidth=".7" /></OverMark>
                <OverMark $x={517} width="6" height="9" viewBox="0 0 6 9"><path d="M.5 0v9L5 4V0" fill="#5a8fd0" stroke="#1d355c" strokeWidth=".7" /></OverMark>
                <OverMark $x={684} width="5" height="9" viewBox="0 0 5 9"><path d="M0 0h4.500v5z" fill="#e6c63c" /><path d="M4.500 0v9" stroke="#222" /></OverMark>
              </Timeline>
              <ScrollButton $w={9} $h={10} aria-label="Réglages de règle"><Stroke w={6} h={8} d="M0 .5h6M3 3v5" fill="M3 1.500l2.500 3h-5z" /></ScrollButton>
            </RulerRow>

            <RulerRow $h={12}>
              <RulerName>Timecode</RulerName>
              <Timeline>
                <RulerSelection $c="#242424" />
                <Tick $w={228} $plain $first>3.75</Tick>
                <Tick $w={267} $plain>00:43:59:16.00</Tick>
                <Tick $w={266} $plain>00:43:59:16.25</Tick>
                <Tick $w={90} $plain>00:43:59:16.50</Tick>
                <Beam width="8" height="10" viewBox="0 0 8 10"><path d="M1 1h2l1 1 1-1h2M4 2v7M1 9h6" fill="none" stroke="#fff" strokeWidth="1.500" /></Beam>
              </Timeline>
            </RulerRow>

            <RulerRow $h={11}>
              <RulerName>Marqueurs <MarkerAdd aria-label="Ajouter un marqueur" /></RulerName>
              <Timeline $bg="#999" />
            </RulerRow>

            <EditArea>
              <Tracks>
                <ColumnHeads>
                  <ListTools>
                    <svg width="10" height="7"><rect width="10" height="7" fill="#e8e8e8" /><path d="M5 1h4v5H5z" fill="#aaa" /></svg><Down />
                    <ClockGlyph c="#5d8fd0" /><Down />
                  </ListTools>
                  <span>INSERTS A-E</span><span>INSERTS F-J</span><span>E/S</span><span />
                </ColumnHeads>

                <TrackRow $h={198}>
                  <TrackStrip name="REC" tone={GREEN} selected solo insert="PAZ-Metrs" input="VM-VAIO 1" />
                  <Scale><i /></Scale>
                  <Stage $edge="#3c5666">
                    <ClipPart /><ClipPart $on /><ClipPart />
                    <WavePlot width="845" height="197" viewBox="0 0 2535 591" fill="none" strokeWidth="3" aria-hidden="true">
                      <path d="M0 296H444M1569 296H2535" stroke="#3d6a88" />
                      <path d="M444 296H1569" stroke="#131c22" />
                      <polyline transform="translate(-15 189)" points={BEFORE} stroke="#1e3f58" />
                      <polyline transform="translate(-15 189)" points={INSIDE} stroke="#dfe7ea" />
                      <polyline transform="translate(1245 189)" points={AFTER} stroke="#1e3f58" />
                    </WavePlot>
                  </Stage>
                </TrackRow>
                <VolumeLane height={66} top={17} weight={2} selected ink="#15171a" />

                <TrackRow $h={128}>
                  <TrackStrip name="REC.dup1" tone={GREEN} muted input="VM-VAIO 2" />
                  <Scale><i /></Scale>
                  <Stage />
                </TrackRow>
                <VolumeLane height={64} top={16} weight={2} ink="#2f352b" />

                <TrackRow $h={26}>
                  <TrackStrip name="Séqncfnlcpré11" tone={BLUE} muted short input="Adf1(1)/Ad2(1)" />
                  <Scale />
                  <Stage />
                </TrackRow>
              </Tracks>
              <VScroll>
                <ScrollButton $w={9} $h={12} aria-label="Vue"><CheckerGlyph gold /></ScrollButton>
                <LightButton $w={9} $h={13} aria-label="Zoom forme d'onde"><WaveGlyph w={6} /></LightButton>
                <LightButton $w={9} $h={14} aria-label="Zoom notes"><Stroke w={6} h={6} d="M0 2h3M3 4.500h3" /></LightButton>
                <ScrollButton $w={9} $h={12} aria-label="Monter"><Up /></ScrollButton>
                <Track $h={184} $dark />
                <Track />
                <ScrollButton $w={9} $h={11} aria-label="Descendre"><Down /></ScrollButton>
                <LightButton $w={9} $h={10} aria-label="Réduire la hauteur"><Stroke w={5} h={5} d="M0 2.500h5" /></LightButton>
                <LightButton $w={9} $h={10} aria-label="Augmenter la hauteur"><Stroke w={5} h={5} d="M0 2.500h5M2.500 0v5" /></LightButton>
              </VScroll>
            </EditArea>

            <BottomBar>
              <BottomLeft><Stroke w={8} h={7} d="M.5 0v7M2 3.500h6M4.500 1L2 3.500 4.500 6" /></BottomLeft>
              <ScrollButton $w={12} $h={10} aria-label="Défiler à gauche"><Left /></ScrollButton>
              <Track />
              <Track $across $h={8} $dark />
              <ScrollButton $w={10} $h={10} aria-label="Défiler à droite"><Right /></ScrollButton>
              <LightButton $w={10} $h={10} aria-label="Zoom arrière"><Stroke w={5} h={5} d="M0 2.500h5" /></LightButton>
              <LightButton $w={10} $h={10} aria-label="Zoom avant"><Stroke w={5} h={5} d="M0 2.500h5M2.500 0v5" /></LightButton>
              <EndButton aria-label="Aller à la fin"><Stroke w={8} h={7} d="M7.500 0v7M0 3.500h6M3.500 1L6 3.500 3.500 6" /></EndButton>
            </BottomBar>
          </Editor>

          <ClipsPanel>
            <PanelHeader><h2>CLIPS</h2><RoundMenu aria-label="Options des clips"><Down /></RoundMenu></PanelHeader>
            <PanelBody>
              <ClipPane>
                <ClipList>
                  {Array.from({ length: 63 }, (_, i) => (
                    <ClipItem key={i}>
                      <svg width="5" height="5"><circle cx="2.500" cy="2.500" r="2" fill="#6f7fc0" stroke="#20286a" /></svg>
                      <WaveGlyph w={6} h={6} />
                      <span>RE</span>
                    </ClipItem>
                  ))}
                </ClipList>
              </ClipPane>
              <SideScroll>
                <CheckerGlyph />
                <LightButton $w={10} $h={11} $ink="#fff" aria-label="Monter"><Up /></LightButton>
                <Track $grow={380} /><Track $grow={116} $dark /><Track $grow={15} $c="#c4c4c6" />
                <ScrollButton $w={10} $h={11} aria-label="Descendre"><Down /></ScrollButton>
              </SideScroll>
            </PanelBody>
            <HScroll>
              <ScrollButton $w={12} $h={11} aria-label="Gauche"><Left /></ScrollButton>
              <Track $across $h={8} $dark /><Track />
              <ScrollButton $w={11} $h={11} aria-label="Droite"><Right /></ScrollButton>
              <Stroke w={10} h={11} d="M3 11l7-7M6 11l4-4" sw={0.7} />
            </HScroll>
          </ClipsPanel>
        </Body>
      </EditWindow>

      <Taskbar>
        <StartButton aria-label="Démarrer"><svg width="12" height="12" viewBox="0 0 12 12"><path d="M0 1.700l5.200-.8v4.800H0zM5.800.8L12 0v5.700H5.800zM0 6.300h5.200v4.800L0 10.300zM5.800 6.300H12V12l-6.200-.8z" fill="#fff" /></svg></StartButton>
        <Search>
          <svg width="15" height="15"><circle cx="7.500" cy="7.500" r="6" fill="none" stroke="#111" strokeWidth="2" /></svg>
          <input placeholder="Taper ici pour rechercher" />
          <svg width="9" height="13" viewBox="0 0 9 13" fill="none" stroke="#333"><rect x="2.500" y=".5" width="4" height="8" rx="2" /><path d="M.5 6v1.500a4 3 0 0 0 8 0V6M4.500 10.500V13" /></svg>
        </Search>
        <TaskButton aria-label="Vue des tâches"><Stroke w={12} h={12} d="M.5 1.500h7M.5 4h7v4h-7zM.5 10.500h7M.5 0v2M7.500 0v2M.5 10v2M7.500 10v2M10.500 0v12" fill="M9 3h3v3H9z" /></TaskButton>
        <TaskButton aria-label="Explorateur"><svg width="16" height="14" viewBox="0 0 16 14"><path d="M1 1h5l1 1.500h8V13H1z" fill="#f3d77a" /><path d="M1 4h14v9H1z" fill="#fbe9a6" /><path d="M3 13V7.500h10V13h-2.500V10h-5v3z" fill="#59b4d9" /></svg></TaskButton>
        <TaskButton $open aria-label="Chrome"><svg width="19" height="17" viewBox="0 0 19 17"><circle cx="8" cy="8" r="7.500" fill="#dd4b3e" /><path d="M8 8L1.500 4.200A7.500 7.500 0 0 0 7 15.400z" fill="#2fa24f" /><path d="M8 8h7.500A7.500 7.500 0 0 1 7 15.400z" fill="#f2c530" /><circle cx="8" cy="8" r="3.600" fill="#fff" /><circle cx="8" cy="8" r="2.800" fill="#4383e8" /><rect x="9" y="6" width="9" height="11" rx="4" fill="#6a503f" /><circle cx="13.500" cy="10.500" r="2.800" fill="#c69878" /></svg></TaskButton>
        <TaskButton $open $on aria-label="Pro Tools"><AvidGlyph s={16} /></TaskButton>
        <TaskButton $open aria-label="Enregistreur"><svg width="17" height="16" viewBox="0 0 17 16"><rect x=".5" y=".5" width="16" height="15" rx="3" fill="#46525b" stroke="#7b878f" /><circle cx="5" cy="5" r="2.200" fill="#aeb8bf" /><path d="M8 3h6v4H8z" fill="#2b343b" stroke="#8f9aa2" /><path d="M3 11.500h11" stroke="#c5ccd1" strokeWidth="2" strokeDasharray="2 1" /></svg></TaskButton>
        <TaskButton $open aria-label="Voicemeeter"><svg width="16" height="15" viewBox="0 0 16 15"><rect width="16" height="8" fill="#dd3b34" /><rect y="8" width="16" height="7" fill="#27333d" /><text x="8" y="6" fontSize="5" fontWeight="700" textAnchor="middle" fill="#fbd9d6">VOICE</text><text x="8" y="13" fontSize="4" fontWeight="700" textAnchor="middle" fill="#dbe2e8">MEETER</text></svg></TaskButton>
        <TaskButton $open aria-label="Audacity"><svg width="18" height="15" viewBox="0 0 18 15"><path d="M2.500 13V8.500a6.500 6.500 0 0 1 13 0V13" fill="none" stroke="#1c2fb4" strokeWidth="3.500" /><circle cx="9" cy="10" r="4.500" fill="#e2562a" /><path d="M5 10h8" stroke="#f6d33c" strokeWidth="2.500" /></svg></TaskButton>
        <Tray>
          <button aria-label="Contacts"><Stroke w={12} h={12} d="M1 11.500c0-4 5-4 5 0M6 8c.5-3 5-3 5 1M3.500 8.500a1.700 1.700 0 1 0 0-3.400 1.700 1.700 0 0 0 0 3.400zM8.500 5a1.900 1.900 0 1 0 0-3.800 1.900 1.900 0 0 0 0 3.800z" /></button>
          <button aria-label="Icônes cachées"><Stroke w={9} h={6} d="M.5 5L4.500 1l4 4" /></button>
          <button aria-label="Volume"><Stroke w={11} h={10} d="M.5 3.500h2L5.500 1v8L2.500 6.500h-2zM7 3.500c1 1 1 2 0 3M8.500 2c1.700 2 1.700 4 0 6M9.500 .8c2 2.500 2 6 0 8.400" sw={0.8} /></button>
          <button aria-label="Moniteur"><svg width="11" height="11" viewBox="0 0 11 11" fill="none" strokeWidth="1.800"><path d="M2 9a4.500 4.500 0 0 1 0-6" stroke="#4eb04a" /><path d="M2 3a4.500 4.500 0 0 1 6-1" stroke="#d8c33a" /><path d="M8 2a4.500 4.500 0 0 1 1.500 6" stroke="#cf4a38" /><path d="M4 5.500h3M4 8h4" stroke="#ddd" strokeWidth="1" /></svg></button>
          <button aria-label="Dropbox"><svg width="10" height="9" viewBox="0 0 10 9"><path d="M2.500 0L5 1.700 2.500 3.400 0 1.700zM7.500 0L10 1.700 7.500 3.400 5 1.700zM2.500 3.600L5 5.300 2.500 7 0 5.300zM7.500 3.600L10 5.300 7.500 7 5 5.300zM5 5.900l2 1.400L5 8.800 3 7.300z" fill="#fff" /></svg></button>
          <Clock>11:03<br />29/06/2018</Clock>
          <NoticeButton aria-label="Notifications"><svg width="12" height="12" viewBox="0 0 12 12"><path d="M0 0h12v9H7.500L6 11.500 4.500 9H0z" fill="#fff" /><path d="M2 2.500h8M2 4.500h8M2 6.500h6" stroke="#1b2a22" strokeWidth=".8" /></svg></NoticeButton>
        </Tray>
      </Taskbar>
    </Page>
  );
}
